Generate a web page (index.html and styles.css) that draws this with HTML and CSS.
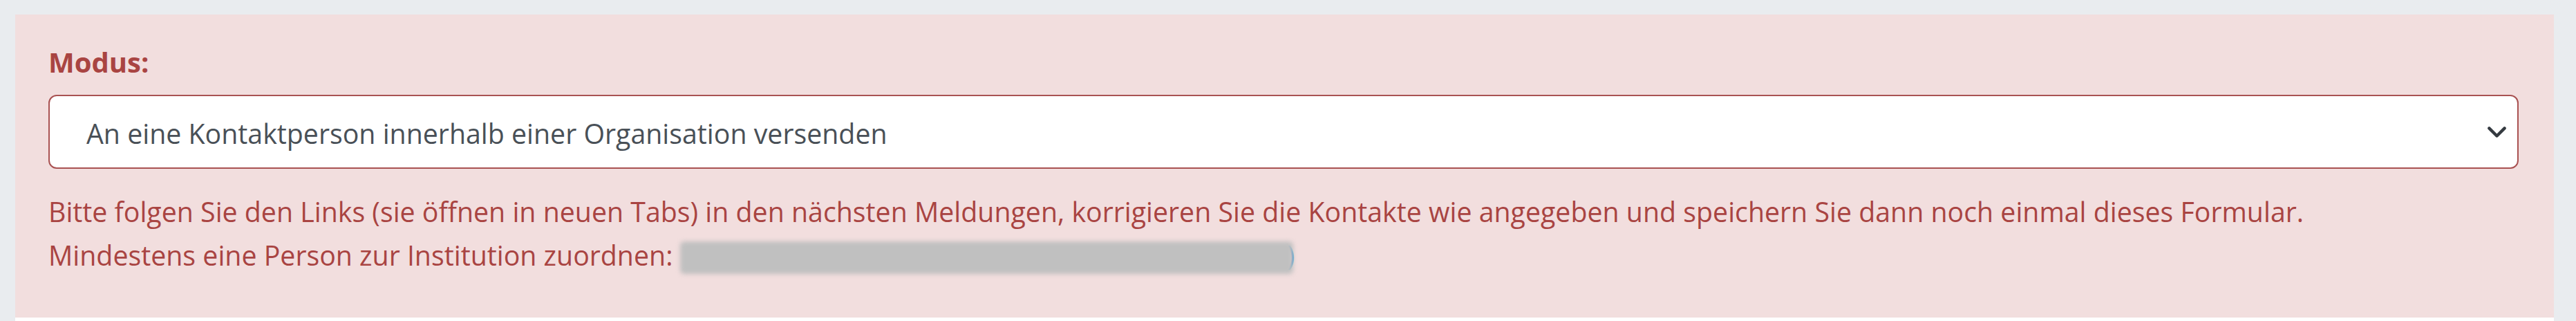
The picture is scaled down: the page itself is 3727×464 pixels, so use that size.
FILE: index.html
```html
<!DOCTYPE html>
<html lang="de">
<head>
<meta charset="utf-8">
<title>Modus</title>
<link rel="stylesheet" href="styles.css">
</head>
<body>
<div class="page">
  <div class="panel">
    <label class="label" for="modus">Modus:</label>
    <div class="select-wrap">
      <select id="modus" class="select">
        <option>An eine Kontaktperson innerhalb einer Organisation versenden</option>
      </select>
      <svg class="chevron" width="27" height="17" viewBox="0 0 27 17" aria-hidden="true">
        <polyline points="2.4,2.4 13.5,13.5 24.6,2.4" fill="none" stroke="#343a40" stroke-width="4.4" stroke-linecap="round" stroke-linejoin="round"/>
      </svg>
    </div>
    <div class="messages">
      <div class="msg">Bitte folgen Sie den Links (sie öffnen in neuen Tabs) in den nächsten Meldungen, korrigieren Sie die Kontakte wie angegeben und speichern Sie dann noch einmal dieses Formular.</div>
      <div class="msg">Mindestens eine Person zur Institution zuordnen: <a class="link" href="#"><span class="redacted"></span><span class="paren">)</span></a></div>
    </div>
  </div>
  <div class="next-card"></div>
</div>
</body>
</html>
```
FILE: styles.css
```css
html, body {
  margin: 0;
  padding: 0;
  background: #e9ecef;
  overflow: hidden;
}
body {
  font-family: "Open Sans", "Noto Sans", "Liberation Sans", sans-serif;
  font-size: 39.3px;
  color: #a94442;
}
.page {
  padding: 21px 32px 0 22px;
}
.panel {
  background: #f2dede;
  padding: 42px 51px 58px 48px;
}
.label {
  display: block;
  font-weight: 700;
  font-size: 40px;
  line-height: 54px;
  color: #a94442;
  margin-bottom: 20px;
}
.select-wrap {
  position: relative;
}
.select {
  display: block;
  width: 100%;
  height: 107px;
  box-sizing: border-box;
  -webkit-appearance: none;
  appearance: none;
  background: #fff;
  border: 2px solid #a95252;
  border-radius: 12px;
  padding: 4px 60px 0 53px;
  font-family: inherit;
  font-size: 39.3px;
  color: #495057;
  outline: none;
  margin: 0;
}
.chevron {
  position: absolute;
  right: 18px;
  top: 46px;
  pointer-events: none;
}
.messages {
  margin-top: 31px;
}
.msg {
  line-height: 63px;
  white-space: nowrap;
}
.link {
  color: #3b8fd3;
  text-decoration: none;
}
.redacted {
  position: relative;
  z-index: 1;
  display: inline-block;
  width: 887px;
  height: 47px;
  vertical-align: -12px;
  background: #c0c0c0;
  border-radius: 6px;
  filter: blur(3px);
  margin-right: -9px;
}
.next-card {
  background: #fff;
  height: 20px;
}
```
